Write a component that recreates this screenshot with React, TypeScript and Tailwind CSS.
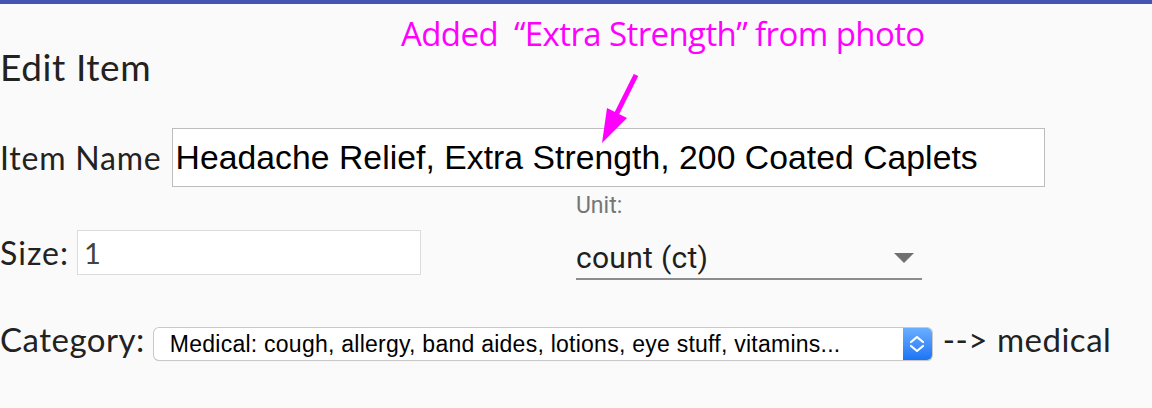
import React from "react";

const Annotation = () => {
  return (
    <>
      <div
        className="absolute left-[401px] top-[17px] text-[33px] leading-none tracking-[-0.6px] text-[#ff00ff] whitespace-pre"
        style={{ fontFamily: '"Open Sans", sans-serif' }}
      >
        {"Added  \u201cExtra Strength\u201d from photo"}
      </div>
      <svg className="absolute left-0 top-0" width="1152" height="408" viewBox="0 0 1152 408">
        <line x1="636" y1="75" x2="615" y2="117" stroke="#ff00ff" strokeWidth="5" />
        <polygon points="602,143 607,108 627,118" fill="#ff00ff" />
      </svg>
    </>
  );
};

export default function App() {
  return (
    <div
      className="relative w-[1152px] h-[408px] overflow-hidden bg-[#fafafa] text-[#222]"
      style={{ fontFamily: "Lato, sans-serif" }}
    >
      {/* Top bar */}
      <div className="h-[4px] bg-[#4454b3]" />

      {/* Heading */}
      <h2 className="mt-[44px] text-[37px] leading-none tracking-[0.6px]">Edit Item</h2>

      {/* Item name */}
      <div className="mt-[43px] flex items-center gap-[10px]">
        <label className="text-[32px] leading-none tracking-[0.8px]">Item Name</label>
        <div
          className="w-[873px] h-[59px] flex items-center border border-[#bdbdbd] bg-white pl-[3px] text-[33.7px] tracking-[0.05px] text-black"
          style={{ fontFamily: '"Liberation Sans", Arial, sans-serif' }}
        >
          Headache Relief, Extra Strength, 200 Coated Caplets
        </div>
      </div>

      {/* Size + Unit */}
      <div className="flex items-start">
        <div className="mt-[43px] flex items-center gap-[8px]">
          <label className="text-[32px] leading-none tracking-[1px]">Size:</label>
          <div className="w-[344px] h-[45px] flex items-center border border-[#dcdcdc] bg-white pl-[6px] text-[29px] text-[#444]">
            1
          </div>
        </div>
        <div
          className="ml-[155px] mt-[7px] w-[346px]"
          style={{ fontFamily: "Roboto, sans-serif" }}
        >
          <div className="text-[23px] leading-none text-[#757575]">Unit:</div>
          <div className="mt-[26px] flex items-center justify-between border-b-2 border-[#8c8c8c] pb-[5px]">
            <span className="text-[30px] leading-none tracking-[0.3px] text-[#1f1f1f]">count (ct)</span>
            <span className="mr-[8px] h-0 w-0 border-x-[10px] border-t-[10px] border-x-transparent border-t-[#707070]" />
          </div>
        </div>
      </div>

      {/* Category */}
      <div className="mt-[43px] flex items-start">
        <label className="text-[33px] leading-none tracking-[0.5px]">Category:</label>
        <div className="ml-[9px] mt-[5px] flex h-[32px] w-[778px] rounded-[5px] bg-white shadow-[0_0_0_1px_#c9c9c9,0_1px_1px_rgba(0,0,0,0.2)]">
          <div
            className="flex flex-1 items-center whitespace-nowrap pl-[16px] text-[23px] tracking-[0.25px] text-black"
            style={{ fontFamily: '"Liberation Sans", Arial, sans-serif' }}
          >
            Medical: cough, allergy, band aides, lotions, eye stuff, vitamins...
          </div>
          <div className="flex w-[29px] items-center justify-center rounded-r-[5px] bg-gradient-to-b from-[#6aaeff] to-[#1a73f6]">
            <svg width="18" height="20" viewBox="0 0 18 20" fill="none" stroke="white" strokeWidth="2.2" strokeLinecap="round" strokeLinejoin="round">
              <polyline points="3,8 9,3 15,8" />
              <polyline points="3,12 9,17 15,12" />
            </svg>
          </div>
        </div>
        <span className="ml-[11px] text-[33px] leading-none tracking-[0.5px]">--&gt; medical</span>
      </div>

      <Annotation />
    </div>
  );
}
